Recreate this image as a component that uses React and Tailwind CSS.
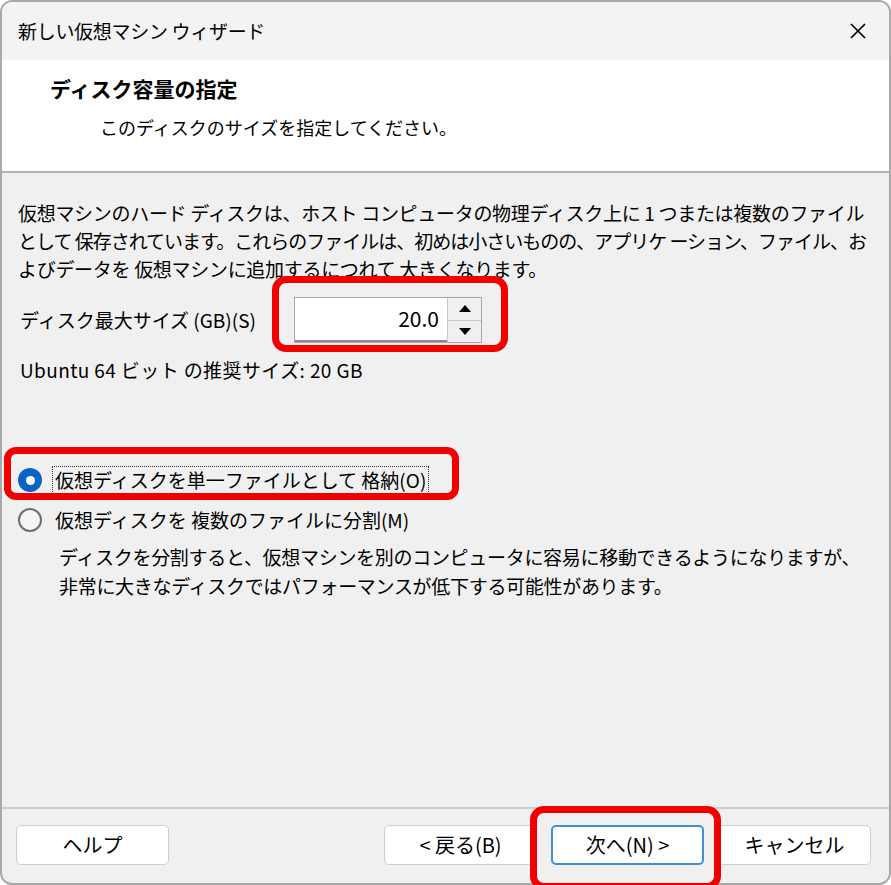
import { X } from 'lucide-react'

const font = { fontFamily: '"Noto Sans CJK JP", "Liberation Sans", sans-serif' }

function Spin() {
  return (
    <div className="flex h-[46px] w-[188px] border border-[#a8a8a8] bg-white">
      <div className="flex flex-1 items-center justify-end pr-[8px] text-[21px] border-b-2 border-[#8a8a8a]">20.0</div>
      <div className="flex w-[34px] flex-col border-l border-[#c8c8c8] bg-[#f0f0f0]">
        <div className="flex flex-1 items-center justify-center border-b border-[#c8c8c8]">
          <svg width="12" height="7" viewBox="0 0 12 7"><path d="M6 0 L12 7 L0 7 Z" fill="#000" /></svg>
        </div>
        <div className="flex flex-1 items-center justify-center">
          <svg width="12" height="7" viewBox="0 0 12 7"><path d="M0 0 L12 0 L6 7 Z" fill="#000" /></svg>
        </div>
      </div>
    </div>
  )
}

function Btn({ children, primary }) {
  return (
    <div className={`flex h-[40px] w-[153px] items-center justify-center rounded-[5px] bg-white text-[20px] ${primary ? 'border-2 border-[#3f8fd8]' : 'border border-[#cfcfcf]'}`}>
      {children}
    </div>
  )
}

export default function App() {
  return (
    <div className="relative h-[885px] w-[891px] bg-white text-black" style={font}>
      <div className="flex h-[885px] w-[891px] flex-col overflow-hidden rounded-[12px] border-2 border-[#a9a9a9] bg-[#f0f0f0]">
        <div className="flex h-[58px] items-center justify-between bg-[#f3f3f3] pl-[16px] pr-[18px]">
          <span className="text-[19px] tracking-[-0.3px]">新しい仮想マシン ウィザード</span>
          <X size={26} strokeWidth={1.6} />
        </div>
        <div className="flex h-[111px] flex-col bg-white pt-[14px]">
          <div className="pl-[48px] text-[21px] font-bold leading-[28px]">ディスク容量の指定</div>
          <div className="mt-[11px] pl-[98px] text-[18px] leading-[28px]">このディスクのサイズを指定してください。</div>
        </div>
        <div className="h-[2px] bg-[#b5b5b5]" />
        <div className="flex flex-1 flex-col whitespace-nowrap pl-[16px] pt-[26px] text-[19px]">
          <div className="leading-[28px] tracking-[-0.3px]">
            仮想マシンのハード ディスクは、ホスト コンピュータの物理ディスク上に 1 つまたは複数のファイル<br />
            <span className="tracking-[-1px]">として 保存されています。これらのファイルは、初めは小さいものの、アプリケ ーション、ファイル、お</span><br />
            よびデータを 仮想マシンに追加するにつれて 大きくなります。
          </div>
          <div className="mt-[14px] flex items-center">
            <span className="w-[276px] pl-[2px]">ディスク最大サイズ (GB)(S)</span>
            <Spin />
          </div>
          <div className="mt-[13px] pl-[2px] leading-[28px] tracking-[0.4px]">Ubuntu 64 ビット の推奨サイズ: 20 GB</div>
          <div className="mt-[82px] flex h-[28px] items-center">
            <div className="flex h-[24px] w-[24px] items-center justify-center rounded-full bg-[#0a64c2]">
              <div className="h-[9px] w-[9px] rounded-full bg-white" />
            </div>
            <span className="ml-[10px] border border-dotted border-[#333] px-[2px] leading-[26px]">仮想ディスクを単一ファイルとして 格納(O)</span>
          </div>
          <div className="mt-[12px] flex h-[28px] items-center">
            <div className="h-[24px] w-[24px] rounded-full border-2 border-[#6e6e6e] bg-[#f5f5f5]" />
            <span className="ml-[13px] leading-[26px]">仮想ディスクを 複数のファイルに分割(M)</span>
          </div>
          <div className="mt-[8px] pl-[41px] leading-[29px] tracking-[-0.3px]">
            ディスクを分割すると、仮想マシンを別のコンピュータに容易に移動できるようになりますが、<br />
            非常に大きなディスクではパフォーマンスが低下する可能性があります。
          </div>
        </div>
        <div className="h-[2px] bg-[#cfcfcf]" />
        <div className="flex h-[74px] items-start pt-[16px] pl-[14px] pr-[18px]">
          <Btn>ヘルプ</Btn>
          <div className="flex-1" />
          <div className="flex gap-[14px]">
            <Btn>&lt; 戻る(B)</Btn>
            <Btn primary>次へ(N) &gt;</Btn>
            <Btn>キャンセル</Btn>
          </div>
        </div>
      </div>
      <div className="pointer-events-none absolute left-[272px] top-[276px] h-[76px] w-[236px] rounded-[14px] border-[7px] border-[#f20000]" />
      <div className="pointer-events-none absolute left-[4px] top-[447px] h-[53px] w-[455px] rounded-[12px] border-[7px] border-[#f20000]" />
      <div className="pointer-events-none absolute left-[530px] top-[806px] h-[84px] w-[191px] rounded-[14px] border-[7px] border-[#f20000]" />
    </div>
  )
}
